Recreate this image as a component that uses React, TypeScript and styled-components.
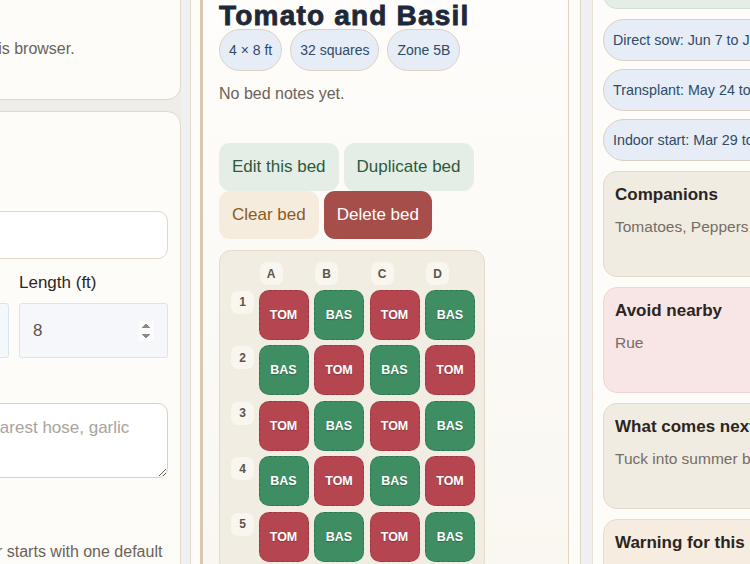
import React from "react";
import styled, { createGlobalStyle } from "styled-components";

const GlobalStyle = createGlobalStyle`
  html, body { margin: 0; padding: 0; overflow: hidden; background: #f0f0f2; }
  body { font-family: "Liberation Sans", Arial, sans-serif; }
  * { box-sizing: border-box; }
`;

const Page = styled.div`
  display: flex;
  align-items: flex-start;
  margin-left: -153px;
  width: 1400px;
  height: 564px;
  overflow: hidden;
`;

/* ---------- left column ---------- */
const LeftColumn = styled.aside`
  flex: none;
  width: 334px;
  margin-top: -20px;
  display: flex;
  flex-direction: column;
  gap: 11px;
  background: #efede7;
`;

const Card = styled.section`
  background: #fdfcf8;
  border: 1px solid #e2d8c6;
  border-radius: 14px;
  padding: 14px 12px;
`;

const CardTitle = styled.h2`
  margin: 0;
  font-size: 17px;
  line-height: 20px;
  font-weight: 700;
  color: #2a2521;
`;

const Muted = styled.p<{ $mt?: number; $mb?: number }>`
  margin: ${(p) => p.$mt ?? 0}px 0 ${(p) => p.$mb ?? 0}px;
  font-size: 16px;
  line-height: 18px;
  color: #6b6358;
  white-space: nowrap;
`;

const Form = styled.div`
  display: flex;
  flex-direction: column;
  gap: 14px;
  margin-top: 35px;
`;

const Field = styled.label<{ $gap?: number }>`
  display: flex;
  flex-direction: column;
  gap: ${(p) => p.$gap ?? 10}px;
`;

const FieldRow = styled.div`
  display: grid;
  grid-template-columns: 1fr 1fr;
  gap: 10px;
`;

const Label = styled.span`
  font-size: 17px;
  line-height: 20px;
  color: #2d2722;
`;

const TextInput = styled.input`
  height: 48px;
  width: 100%;
  background: #fff;
  border: 1px solid #e3d8c2;
  border-radius: 10px;
  padding: 0 13px;
  font: 17px "Liberation Sans", Arial, sans-serif;
  color: #5d554d;
  &::placeholder { color: #a9a39b; }
`;

const NumberInput = styled.input`
  height: 55px;
  width: 100%;
  background: #f5f7fb;
  border: 1px solid #dde3ec;
  border-radius: 3px;
  padding: 0 13px;
  font: 17px "Liberation Sans", Arial, sans-serif;
  color: #5d554d;
  &::-webkit-inner-spin-button { opacity: 1; }
`;

const TextArea = styled.textarea`
  height: 75px;
  width: 100%;
  background: #fff;
  border: 1px solid #ddd1ba;
  border-radius: 10px;
  padding: 14px 16px;
  font: 17px/20px "Liberation Sans", Arial, sans-serif;
  color: #5d554d;
  &::placeholder { color: #a9a39b; }
`;

const SmallButton = styled.button`
  align-self: flex-start;
  height: 40px;
  padding: 0 14px;
  border: none;
  border-radius: 10px;
  background: #e4eee7;
  color: #2c5a3c;
  font: 16px "Liberation Sans", Arial, sans-serif;
`;

/* ---------- middle column ---------- */
const MiddleColumn = styled.main`
  flex: none;
  width: 391px;
  margin: -20px 11px 0 9px;
  padding: 10px 11px 0 9px;
  background: #fdfcf8;
  border-left: 1px solid #e5ddcf;
  border-right: 1px solid #e0d6c4;
  min-height: 700px;
`;

const Article = styled.article`
  border-left: 3px solid #d8c9ae;
  border-right: 1px solid #e0d5c2;
  background: linear-gradient(180deg, #fefdfb 0%, #f9f6ef 100%);
  padding: 12px 16px 24px;
  min-height: 690px;
`;

const BedTitle = styled.h1`
  margin: 0;
  font-size: 28px;
  line-height: 27px;
  font-weight: 900;
  letter-spacing: 1.2px;
  color: #1d2838;
  -webkit-text-stroke: 0.8px #1d2838;
  white-space: nowrap;
`;

const ChipRow = styled.div`
  display: flex;
  gap: 8px;
`;

const Chip = styled.span`
  display: inline-flex;
  align-items: center;
  height: 42px;
  padding: 0 9px;
  border: 1.5px solid #dcd3c5;
  border-radius: 999px;
  background: #e6edf6;
  color: #2f4b68;
  font-size: 14px;
  white-space: nowrap;
`;

const ButtonRow = styled.div`
  display: flex;
  flex-wrap: wrap;
  column-gap: 5px;
  row-gap: 0;
  margin-top: 40px;
`;

const ActionButton = styled.button<{ $tone: "green" | "sand" | "danger" }>`
  height: 48px;
  padding: 0 13px;
  border: none;
  border-radius: 11px;
  font: 17px "Liberation Sans", Arial, sans-serif;
  background: ${(p) =>
    p.$tone === "green" ? "#e4eee7" : p.$tone === "sand" ? "#f6ecdd" : "#a54e4a"};
  color: ${(p) =>
    p.$tone === "green" ? "#2c5a3c" : p.$tone === "sand" ? "#8b5a1e" : "#ffffff"};
`;

const GridPanel = styled.div`
  margin-top: 11px;
  width: fit-content;
  padding: 10px 9px 10px 10px;
  background: #f1ede3;
  border: 1px solid #e3dac9;
  border-radius: 12px;
`;

const PlotGrid = styled.div`
  display: grid;
  grid-template-columns: 23px repeat(4, 50px);
  grid-template-rows: 23px;
  grid-auto-rows: 50px;
  gap: 5.5px;
`;

const AxisTag = styled.span`
  justify-self: start;
  align-self: start;
  width: 23px;
  height: 23px;
  margin: 1px 0 0 1px;
  display: flex;
  align-items: center;
  justify-content: center;
  border-radius: 7px;
  background: #f9f6ef;
  color: #5d544c;
  font-size: 12px;
  font-weight: 700;
`;

const Corner = styled.span``;

const PlotCell = styled.div<{ $plant: "TOM" | "BAS" }>`
  display: flex;
  align-items: center;
  justify-content: center;
  border-radius: 10px;
  border: 1px dashed ${(p) => (p.$plant === "TOM" ? "#9a3840" : "#2e7450")};
  background: ${(p) => (p.$plant === "TOM" ? "#b5464f" : "#3f8d62")};
  color: #fff;
  font-size: 12.5px;
  font-weight: 700;
  text-shadow: 0 1px 1px rgba(0, 0, 0, 0.25);
`;

/* ---------- right column ---------- */
const RightColumn = styled.aside`
  flex: none;
  width: 470px;
  margin-top: -61px;
  padding: 11px 11px 11px 10px;
  background: #fdfcf8;
  border-left: 1px solid #e6e0d4;
  display: flex;
  flex-direction: column;
  gap: 10px;
  min-height: 700px;
`;

const HarvestCard = styled.div`
  background: #e4eee6;
  border: 1px solid #d5dfd3;
  border-radius: 14px;
  padding: 14px 12px 23px;
`;

const PillList = styled.div`
  display: flex;
  flex-direction: column;
  align-items: flex-start;
  gap: 8px;
`;

const Pill = styled.span`
  display: inline-flex;
  align-items: center;
  height: 42px;
  padding: 0 14px 0 9px;
  border: 1.5px solid #dad1c1;
  border-radius: 999px;
  background: #e6edf6;
  color: #2f4b68;
  font-size: 14.3px;
  white-space: nowrap;
`;

const InfoCard = styled.div<{ $tone: "plain" | "rose" | "peach" }>`
  min-height: 106px;
  padding: 13px 11px 14px;
  border-radius: 14px;
  border: 1px solid
    ${(p) => (p.$tone === "rose" ? "#eed6d2" : p.$tone === "peach" ? "#eadbc4" : "#e2d9c8")};
  background: ${(p) =>
    p.$tone === "rose" ? "#f8e5e5" : p.$tone === "peach" ? "#f6ecdf" : "#f0ece2"};
`;

const InfoTitle = styled.h3`
  margin: 0;
  font-size: 17px;
  line-height: 20px;
  font-weight: 700;
  color: #2a2521;
  white-space: nowrap;
`;

const InfoText = styled.p`
  margin: 13px 0 0;
  font-size: 15.5px;
  line-height: 18px;
  color: #766d65;
  white-space: nowrap;
`;

const rows = [1, 2, 3, 4, 5];
const cols = ["A", "B", "C", "D"];

export default function App() {
  return (
    <>
      <GlobalStyle />
      <Page>
        <LeftColumn>
          <Card>
            <CardTitle>Storage</CardTitle>
            <Muted $mt={25} $mb={27}>Your plans live in this browser.</Muted>
          </Card>
          <Card>
            <CardTitle>New bed</CardTitle>
            <Form>
              <Field>
                <Label>Bed name</Label>
                <TextInput placeholder="e.g. Herb bed" />
              </Field>
              <FieldRow>
                <Field>
                  <Label>Width (ft)</Label>
                  <NumberInput type="number" defaultValue={4} />
                </Field>
                <Field>
                  <Label>Length (ft)</Label>
                  <NumberInput type="number" defaultValue={8} />
                </Field>
              </FieldRow>
              <Field $gap={11}>
                <Label>Notes</Label>
                <TextArea placeholder="By the fence, nearest hose, garlic row" />
              </Field>
              <SmallButton>Add bed</SmallButton>
            </Form>
            <Muted $mt={11}>This garden planner starts with one default</Muted>
            <Muted>bed you can rename.</Muted>
          </Card>
        </LeftColumn>

        <MiddleColumn>
          <Article>
            <BedTitle>Tomato and Basil</BedTitle>
            <ChipRow>
              <Chip>4 × 8 ft</Chip>
              <Chip>32 squares</Chip>
              <Chip>Zone 5B</Chip>
            </ChipRow>
            <Muted $mt={14}>No bed notes yet.</Muted>
            <ButtonRow>
              <ActionButton $tone="green">Edit this bed</ActionButton>
              <ActionButton $tone="green">Duplicate bed</ActionButton>
              <ActionButton $tone="sand">Clear bed</ActionButton>
              <ActionButton $tone="danger">Delete bed</ActionButton>
            </ButtonRow>
            <GridPanel>
              <PlotGrid>
                <Corner />
                {cols.map((c) => (
                  <AxisTag key={c}>{c}</AxisTag>
                ))}
                {rows.map((r, ri) => (
                  <React.Fragment key={r}>
                    <AxisTag>{r}</AxisTag>
                    {cols.map((c, ci) => {
                      const plant = (ri + ci) % 2 === 0 ? "TOM" : "BAS";
                      return (
                        <PlotCell key={c} $plant={plant}>
                          {plant}
                        </PlotCell>
                      );
                    })}
                  </React.Fragment>
                ))}
              </PlotGrid>
            </GridPanel>
          </Article>
        </MiddleColumn>

        <RightColumn>
          <HarvestCard>
            <InfoTitle>Harvest window</InfoTitle>
          </HarvestCard>
          <PillList>
            <Pill>Direct sow: Jun 7 to Jul 15</Pill>
            <Pill>Transplant: May 24 to Jun 10</Pill>
            <Pill>Indoor start: Mar 29 to Apr 12</Pill>
          </PillList>
          <InfoCard $tone="plain">
            <InfoTitle>Companions</InfoTitle>
            <InfoText>Tomatoes, Peppers, Oregano, Parsley</InfoText>
          </InfoCard>
          <InfoCard $tone="rose">
            <InfoTitle>Avoid nearby</InfoTitle>
            <InfoText>Rue</InfoText>
          </InfoCard>
          <InfoCard $tone="plain">
            <InfoTitle>What comes next</InfoTitle>
            <InfoText>Tuck into summer beds for a late harvest.</InfoText>
          </InfoCard>
          <InfoCard $tone="peach">
            <InfoTitle>Warning for this bed</InfoTitle>
            <InfoText>Basil sulks below 50°F at night.</InfoText>
          </InfoCard>
        </RightColumn>
      </Page>
    </>
  );
}
